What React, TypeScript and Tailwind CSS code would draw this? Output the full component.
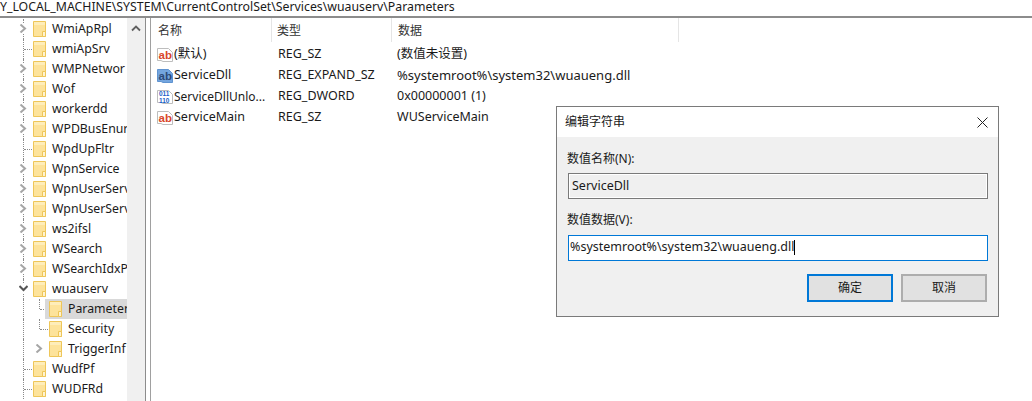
import React from "react";

const FONT = "font-['Noto_Sans','Noto_Sans_CJK_SC',sans-serif]";

const treeItems = [
  { name: "WmiApRpl", state: "closed" },
  { name: "wmiApSrv", state: "leaf" },
  { name: "WMPNetwor", state: "closed" },
  { name: "Wof", state: "closed" },
  { name: "workerdd", state: "closed" },
  { name: "WPDBusEnur", state: "closed" },
  { name: "WpdUpFltr", state: "leaf" },
  { name: "WpnService", state: "closed" },
  { name: "WpnUserServ", state: "closed" },
  { name: "WpnUserServ", state: "closed" },
  { name: "ws2ifsl", state: "closed" },
  { name: "WSearch", state: "closed" },
  { name: "WSearchIdxP", state: "closed" },
  { name: "wuauserv", state: "open" },
  { name: "Parameter", state: "leaf", child: true, selected: true },
  { name: "Security", state: "leaf", child: true },
  { name: "TriggerInf", state: "closed", child: true },
  { name: "WudfPf", state: "leaf" },
  { name: "WUDFRd", state: "leaf" },
];

const values = [
  { icon: "ab", name: "(默认)", nameClass: "", type: "REG_SZ", data: "(数值未设置)", dataClass: "" },
  { icon: "selected", name: "ServiceDll", nameClass: "", type: "REG_EXPAND_SZ", data: "%systemroot%\\system32\\wuaueng.dll", dataClass: "text-[13px]" },
  { icon: "bin", name: "ServiceDllUnlo...", nameClass: "text-[12px]", type: "REG_DWORD", data: "0x00000001 (1)", dataClass: "" },
  { icon: "ab", name: "ServiceMain", nameClass: "", type: "REG_SZ", data: "WUServiceMain", dataClass: "" },
];

const Folder = () => (
  <svg width="13" height="16" viewBox="0 0 13 16" className="shrink-0">
    <path d="M0.5 0.5H12.5V15.5H0.5Z" fill="#fde39b" stroke="#eec659" />
    <path d="M1 1H12V4H1Z" fill="#feedb9" />
    <path d="M9.5 10.5H12.5V15.5H9.5Z" fill="#fff3cf" stroke="#eec659" />
  </svg>
);

const Chevron = ({ open, dark }: { open?: boolean; dark?: boolean }) => (
  <svg width="9" height="9" viewBox="0 0 9 9" className="bg-white">
    <path
      d={open ? "M0.5 2L4.5 6L8.5 2" : "M1.5 0.5L6 4.5L1.5 8.5"}
      fill="none"
      stroke={dark ? "#555555" : "#a6a6a6"}
      strokeWidth="2"
    />
  </svg>
);

const TreeRow = ({ item }: { item: (typeof treeItems)[number] }) => (
  <div className="relative flex h-5 items-center">
    {/* ancestor guide */}
    <span className="absolute left-[23px] top-0 h-5 border-l border-dotted border-[#8a8a8a]" />
    {item.child && item.state === "leaf" && (
      <>
        <span className="absolute left-[39px] top-0 h-[10px] border-l border-dotted border-[#8a8a8a]" />
        <span className="absolute left-[40px] top-[10px] w-[8px] border-t border-dotted border-[#8a8a8a]" />
      </>
    )}
    {!item.child && item.state === "leaf" && (
      <span className="absolute left-[24px] top-[10px] w-[8px] border-t border-dotted border-[#8a8a8a]" />
    )}
    {item.state !== "leaf" && (
      <span className={`absolute top-[5px] flex ${item.child ? "left-[35px]" : "left-[19px]"}`}>
        <Chevron open={item.state === "open"} dark={item.state === "open"} />
      </span>
    )}
    <div className={`flex h-5 min-w-0 flex-1 items-center ${item.child ? "pl-[49px]" : "pl-[33px]"}`}>
      {item.selected && <span className="absolute inset-y-0 left-[45px] right-0 bg-[#d9d9d9]" />}
      <span className="relative flex items-center gap-[6px] whitespace-nowrap">
        <Folder />
        {item.name}
      </span>
    </div>
  </div>
);

const RegIcon = ({ kind }: { kind: string }) => {
  const selected = kind === "selected";
  return (
    <svg width="16" height="16" viewBox="0 0 16 16" className="shrink-0">
      <path
        d="M0.5 1.5H11.5L15.5 5.5V14.5H6L4 13.5H0.5Z"
        fill={selected ? "#74a5de" : "#ffffff"}
        stroke={selected ? "#5f93d0" : "#bdbdbd"}
      />
      {kind === "bin" ? (
        <>
          <text x="2" y="7" fontSize="6.5" fontWeight="700" fill="#1a5fc8" fontFamily="Liberation Sans">011</text>
          <text x="2" y="14" fontSize="6.5" fontWeight="700" fill="#1a5fc8" fontFamily="Liberation Sans">110</text>
        </>
      ) : (
        <text
          x="1.5"
          y="11.5"
          fontSize="11.5"
          fontWeight="700"
          fill={selected ? "#2d4a78" : "#d9472b"}
          fontFamily="Liberation Sans"
        >
          ab
        </text>
      )}
    </svg>
  );
};

const App: React.FC = () => {
  return (
    <div className={`relative h-[401px] w-[1032px] overflow-hidden bg-white text-[12px] text-[#1a1a1a] ${FONT}`}>
      <div className="h-[16px] whitespace-nowrap text-[12.3px] leading-[13px]">
        Y_LOCAL_MACHINE\SYSTEM\CurrentControlSet\Services\wuauserv\Parameters
      </div>
      <div className="h-[2px] bg-[#8c8c8c]" />

      <div className="flex h-[383px]">
        <div className="flex w-[145px] shrink-0">
          <div className="min-w-0 flex-1 overflow-hidden pt-[1px] text-[12.3px]">
            {treeItems.map((item, i) => (
              <TreeRow key={i} item={item} />
            ))}
          </div>
          <div className="flex w-[18px] shrink-0 justify-center bg-[#f0f0f0] pt-[7px]">
            <svg width="10" height="7" viewBox="0 0 10 7">
              <path d="M1 5.5L5 1.5L9 5.5" fill="none" stroke="#606060" strokeWidth="1.8" />
            </svg>
          </div>
        </div>
        <div className="mr-[4px] w-[1px] shrink-0 bg-[#8c8c8c]" />
        <div className="w-[1px] shrink-0 bg-[#a0a0a0]" />

        <div className="min-w-0 flex-1">
          <div className="flex h-[24px] items-center text-[#333333]">
            <div className="h-full w-[121px] border-r border-[#e5e5e5] pl-[7px] leading-[26px]">名称</div>
            <div className="h-full w-[120px] border-r border-[#e5e5e5] pl-[5px] leading-[26px]">类型</div>
            <div className="h-full w-[287px] border-r border-[#e5e5e5] pl-[6px] leading-[26px]">数据</div>
          </div>
          <div className="pt-[2px] text-[12.5px]">
            {values.map((v) => (
              <div key={v.name} className="flex h-[21px] items-center whitespace-nowrap">
                <div className="flex w-[121px] items-center gap-[1px] pl-[6px]">
                  <RegIcon kind={v.icon} />
                  <span className={v.nameClass}>{v.name}</span>
                </div>
                <div className="w-[120px] pl-[6px]">{v.type}</div>
                <div className={`pl-[5px] ${v.dataClass}`}>{v.data}</div>
              </div>
            ))}
          </div>
        </div>
      </div>

      {/* edit string dialog */}
      <div className="absolute left-[556px] top-[106px] h-[211px] w-[443px] border border-[#7a7a7a] bg-[#f0f0f0]">
        <div className="flex h-[30px] items-center justify-between bg-white pl-[8px] pr-[10px]">
          <span>编辑字符串</span>
          <svg width="11" height="11" viewBox="0 0 11 11">
            <path d="M0.5 0.5L10.5 10.5M10.5 0.5L0.5 10.5" stroke="#222222" strokeWidth="1" />
          </svg>
        </div>
        <div className="px-[11px] pt-[12px]">
          <div className="ml-[-1px] h-[24px] leading-[20px]">数值名称(N):</div>
          <div className="flex h-[26px] w-[420px] items-center border border-[#7a7a7a] bg-[#f0f0f0] pl-[3px] text-[12.5px] shadow-[inset_0_0_0_1px_#ffffff]">
            ServiceDll
          </div>
          <div className="ml-[-1px] mt-[11px] h-[25px] leading-[20px]">数值数据(V):</div>
          <div className="flex h-[26px] w-[420px] items-center border border-[#0078d7] bg-white pb-[1px] pl-[1px] text-[12.5px]">
            %systemroot%\system32\wuaueng.dll
            <span className="h-[15px] w-[1px] bg-black" />
          </div>
          <div className="mt-[13px] flex w-[419px] justify-end gap-[8px]">
            <button className="h-[28px] w-[86px] border-2 border-[#0078d7] bg-[#e1e1e1]">确定</button>
            <button className="h-[28px] w-[86px] border-2 border-[#adadad] bg-[#e1e1e1]">取消</button>
          </div>
        </div>
      </div>
    </div>
  );
};

export default App;
